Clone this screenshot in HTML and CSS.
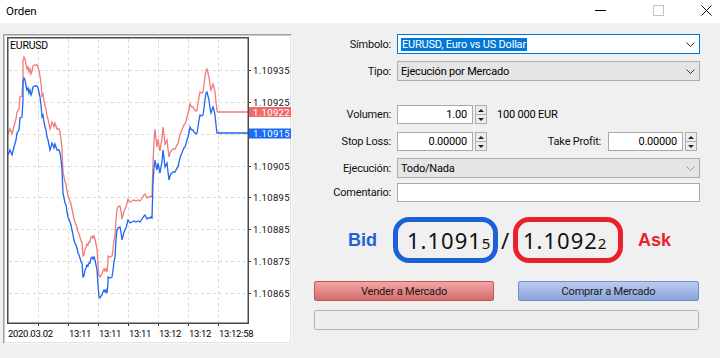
FILE: index.html
```html
<!DOCTYPE html>
<html lang="es">
<head>
<meta charset="utf-8">
<title>Orden</title>
<link rel="stylesheet" href="styles.css">
</head>
<body>
<div class="titlebar">
  <span class="title">Orden</span>
  <div class="controls">
    <svg class="ic-min" width="11" height="11" viewBox="0 0 11 11"><line x1="0" y1="5.5" x2="11" y2="5.5" stroke="#000" stroke-width="1"/></svg>
    <svg class="ic-max" width="11" height="11" viewBox="0 0 11 11"><rect x="0.5" y="0.5" width="10" height="10" fill="none" stroke="#c4c4c4" stroke-width="1"/></svg>
    <svg class="ic-close" width="11" height="11" viewBox="0 0 11 11"><path d="M0.5 0.5 L10.5 10.5 M10.5 0.5 L0.5 10.5" stroke="#111" stroke-width="1" fill="none"/></svg>
  </div>
</div>
<div class="main">
  <div class="chart-panel">
    <svg class="chart" width="287" height="308" viewBox="4 35 287 308">
      <g class="grid">
        <line x1="9" y1="70.5" x2="247" y2="70.5"/>
        <line x1="9" y1="102.5" x2="247" y2="102.5"/>
        <line x1="9" y1="134.5" x2="247" y2="134.5"/>
        <line x1="9" y1="166.5" x2="247" y2="166.5"/>
        <line x1="9" y1="197.5" x2="247" y2="197.5"/>
        <line x1="9" y1="229.5" x2="247" y2="229.5"/>
        <line x1="9" y1="261.5" x2="247" y2="261.5"/>
        <line x1="9" y1="293.5" x2="247" y2="293.5"/>
        <line x1="38.5" y1="39" x2="38.5" y2="322"/>
        <line x1="68.5" y1="39" x2="68.5" y2="322"/>
        <line x1="98.5" y1="39" x2="98.5" y2="322"/>
        <line x1="128.5" y1="39" x2="128.5" y2="322"/>
        <line x1="158.5" y1="39" x2="158.5" y2="322"/>
        <line x1="188.5" y1="39" x2="188.5" y2="322"/>
        <line x1="218.5" y1="39" x2="218.5" y2="322"/>
      </g>
      <g class="ticks">
        <line x1="248" y1="70.5" x2="251" y2="70.5"/>
        <line x1="248" y1="102.5" x2="251" y2="102.5"/>
        <line x1="248" y1="166.5" x2="251" y2="166.5"/>
        <line x1="248" y1="197.5" x2="251" y2="197.5"/>
        <line x1="248" y1="229.5" x2="251" y2="229.5"/>
        <line x1="248" y1="261.5" x2="251" y2="261.5"/>
        <line x1="248" y1="293.5" x2="251" y2="293.5"/>
        <line x1="38.5" y1="323" x2="38.5" y2="326"/>
        <line x1="68.5" y1="323" x2="68.5" y2="326"/>
        <line x1="98.5" y1="323" x2="98.5" y2="326"/>
        <line x1="128.5" y1="323" x2="128.5" y2="326"/>
        <line x1="158.5" y1="323" x2="158.5" y2="326"/>
        <line x1="188.5" y1="323" x2="188.5" y2="326"/>
        <line x1="218.5" y1="323" x2="218.5" y2="326"/>
      </g>
      <polyline class="ask-line" transform="translate(0,-21)" points="8,155 10,150 12,155 14,147 16,140 17,133 19,130 20,118 22,117 23,100 23,82 24,78 25,80 26,86 27,90 28,88 29,93 30,90 31,95 32,92 33,87 35,86 37,86 38,88 39,92 40,97 41,105 42,117 43,115 44,122 45,127 46,130 47,137 48,140 50,150 51,147 52,143 53,145 54,148 55,144 56,147 57,150 59,150 60,153 61,160 62,170 63,193 64,198 65,203 66,205 67,212 68,217 70,222 71,225 72,230 73,235 74,240 75,243 77,248 78,253 79,255 80,258 81,262 82,263 83,277 84,276 85,270 86,268 87,265 88,266 89,263 90,263 91,258 92,257 93,259 94,257 95,260 96,265 97,270 98,285 99,297 100,298 101,296 102,295 103,292 104,290 105,292 106,290 107,293 108,283 108,277 110,278 112,277 113,270 114,262 115,257 116,240 117,230 118,228 120,227 121,232 122,240 123,236 124,232 125,230 126,228 127,224 128,220 130,223 132,222 134,221 136,222 138,221 140,222 142,219 144,216 145,215 146,217 147,219 148,218 150,218 151,217 152,218 153,183 154,162 155,150 156,160 157,168 158,160 159,166 160,172 161,165 162,160 163,148 164,156 165,165 166,163 167,161 168,170 169,178 170,174 171,172 172,171 173,170 175,170 176,168 177,166 178,165 179,160 180,156 181,153 182,151 183,148 184,146 185,145 186,142 187,138 188,135 189,130 190,125 191,127 192,128 193,128 194,130 195,131 196,132 197,131 198,125 199,118 200,113 202,114 203,113 204,106 205,98 206,91 207,90 208,94 209,98 210,106 211,111 212,108 213,105 214,108 215,113 216,123 217,132 218,133 248,133"/>
      <polyline class="bid-line" points="8,155 10,150 12,155 14,147 16,140 17,133 19,130 20,118 22,117 23,100 23,82 24,78 25,80 26,86 27,90 28,88 29,93 30,90 31,95 32,92 33,87 35,86 37,86 38,88 39,92 40,97 41,105 42,117 43,115 44,122 45,127 46,130 47,137 48,140 50,150 51,147 52,143 53,145 54,148 55,144 56,147 57,150 59,150 60,153 61,160 62,170 63,193 64,198 65,203 66,205 67,212 68,217 70,222 71,225 72,230 73,235 74,240 75,243 77,248 78,253 79,255 80,258 81,262 82,263 83,277 84,276 85,270 86,268 87,265 88,266 89,263 90,263 91,258 92,257 93,259 94,257 95,260 96,265 97,270 98,285 99,297 100,298 101,296 102,295 103,292 104,290 105,292 106,290 107,293 108,283 108,277 110,278 112,277 113,270 114,262 115,257 116,240 117,230 118,228 120,227 121,232 122,240 123,236 124,232 125,230 126,228 127,224 128,220 130,223 132,222 134,221 136,222 138,221 140,222 142,219 144,216 145,215 146,217 147,219 148,218 150,218 151,217 152,218 153,183 154,168 155,160 156,166 157,170 158,163 159,168 160,173 161,167 162,162 163,150 164,158 165,167 166,165 167,163 168,172 169,180 170,176 171,174 172,173 173,172 175,172 176,170 177,168 178,167 179,162 180,158 181,155 182,153 183,150 184,148 185,147 186,144 187,140 188,137 189,132 190,127 191,129 192,130 193,130 194,132 195,133 196,134 197,133 198,127 199,120 200,115 202,116 203,115 204,108 205,100 206,93 207,92 208,96 209,100 210,108 211,113 212,110 213,107 214,110 215,115 216,125 217,133 248,133"/>
      <rect class="frame" x="7.75" y="37.75" width="240.5" height="285.5"/>
      <text class="sym" x="10" y="49">EURUSD</text>
      <g class="price">
        <text x="253" y="73.5">1.10935</text>
        <text x="253" y="105.5">1.10925</text>
        <text x="253" y="169.5">1.10905</text>
        <text x="253" y="200.5">1.10895</text>
        <text x="253" y="232.5">1.10885</text>
        <text x="253" y="264.5">1.10875</text>
        <text x="253" y="296.5">1.10865</text>
      </g>
      <rect class="ask-tag" x="249" y="107" width="43" height="10"/>
      <text class="tag-text" x="253" y="115.5">1.10922</text>
      <rect class="bid-tag" x="249" y="128.5" width="43" height="10"/>
      <text class="tag-text" x="253" y="137">1.10915</text>
      <g class="time">
        <text x="8" y="337">2020.03.02</text>
        <text x="69" y="337">13:11</text>
        <text x="99" y="337">13:11</text>
        <text x="129" y="337">13:11</text>
        <text x="159" y="337">13:12</text>
        <text x="189" y="337">13:12</text>
        <text x="219" y="337">13:12:58</text>
      </g>
    </svg>
  </div>

  <div class="form">
    <div class="row">
      <span class="lbl">Símbolo:</span>
      <div class="combo focus">
        <span class="sel">EURUSD, Euro vs US Dollar</span>
        <svg class="chev" width="9" height="5" viewBox="0 0 9 5"><polyline points="0.5,0.5 4.5,4.5 8.5,0.5" fill="none" stroke="#333" stroke-width="1"/></svg>
      </div>
    </div>
    <div class="row r2">
      <span class="lbl">Tipo:</span>
      <div class="combo">
        <span>Ejecución por Mercado</span>
        <svg class="chev" width="9" height="5" viewBox="0 0 9 5"><polyline points="0.5,0.5 4.5,4.5 8.5,0.5" fill="none" stroke="#333" stroke-width="1"/></svg>
      </div>
    </div>
    <div class="row r3">
      <span class="lbl">Volumen:</span>
      <div class="input num">1.00</div>
      <div class="spin"><span class="up"></span><span class="dn"></span></div>
      <span class="note">100 000 EUR</span>
    </div>
    <div class="row r4">
      <span class="lbl">Stop Loss:</span>
      <div class="input num">0.00000</div>
      <div class="spin"><span class="up"></span><span class="dn"></span></div>
      <span class="lbl tp">Take Profit:</span>
      <div class="input num tpv">0.00000</div>
      <div class="spin"><span class="up"></span><span class="dn"></span></div>
    </div>
    <div class="row r5">
      <span class="lbl">Ejecución:</span>
      <div class="combo">
        <span>Todo/Nada</span>
        <svg class="chev" width="9" height="5" viewBox="0 0 9 5"><polyline points="0.5,0.5 4.5,4.5 8.5,0.5" fill="none" stroke="#9a9a9a" stroke-width="1"/></svg>
      </div>
    </div>
    <div class="row r6">
      <span class="lbl">Comentario:</span>
      <div class="input wide"></div>
    </div>

    <div class="quotes">
      <span class="bid">Bid</span>
      <div class="qbox qb"><span class="qnum">1.1091<span class="small">5</span></span></div>
      <span class="slash">/</span>
      <div class="qbox qa"><span class="qnum">1.1092<span class="small">2</span></span></div>
      <span class="ask">Ask</span>
    </div>

    <div class="buttons">
      <div class="btn sell">Vender a Mercado</div>
      <div class="btn buy">Comprar a Mercado</div>
    </div>
    <div class="status"></div>
  </div>
</div>
</body>
</html>
```
FILE: styles.css
```css
* { box-sizing: border-box; margin: 0; padding: 0; }
html, body { width: 720px; height: 358px; overflow: hidden; }
body {
  background: #f0f0f0;
  font-family: Roboto, "Liberation Sans", sans-serif;
  font-size: 11px;
  letter-spacing: -0.2px;
  color: #000;
}

/* title bar */
.titlebar {
  height: 23px;
  background: #fff;
  display: flex;
  align-items: center;
  padding: 0 8px 2px 6px;
}
.title { flex: 1; font-size: 11.5px; letter-spacing: 0; }
.controls { display: flex; align-items: center; }
.controls svg { display: block; }
.ic-min { margin-right: 47px; }
.ic-max { margin-right: 37px; }

/* main area */
.main { display: flex; padding-top: 11px; }

.chart-panel {
  margin-left: 3px;
  width: 289px;
  height: 310px;
  background: #fff;
  border: 1px solid;
  border-color: #a0a0a0 #f8f8f8 #f8f8f8 #a0a0a0;
  box-shadow: inset 1px 1px 0 #c8c8c8, inset -1px -1px 0 #e3e3e3;
}
.chart { display: block; }
.grid line { stroke: #d9d9d9; stroke-width: 1; stroke-dasharray: 3 3; }
.ticks line { stroke: #333; stroke-width: 1; }
.frame { fill: none; stroke: #4a4a4a; stroke-width: 1.5; }
.bid-line { fill: none; stroke: #1f66f2; stroke-width: 1.3; stroke-linejoin: miter; }
.ask-line { fill: none; stroke: #f27a7a; stroke-width: 1.3; stroke-linejoin: miter; }
.sym { font-family: Roboto, "Liberation Sans", sans-serif; font-size: 10.5px; fill: #000; letter-spacing: -0.2px; }
.price text { font-family: Roboto, "Liberation Sans", sans-serif; font-size: 9.5px; letter-spacing: 0.35px; fill: #111; }
.tag-text { font-family: Roboto, "Liberation Sans", sans-serif; font-size: 9.5px; letter-spacing: 0.35px; fill: #fff; }
.ask-tag { fill: #f16a6a; }
.bid-tag { fill: #1a6cf2; }
.time text { font-family: Roboto, "Liberation Sans", sans-serif; font-size: 9.5px; letter-spacing: -0.3px; fill: #000; }

/* form */
.form {
  margin-left: 8px;
  width: 400px;
  display: flex;
  flex-direction: column;
}
.row { display: flex; align-items: center; }
.lbl { width: 91px; margin-right: 6px; text-align: right; color: #111; }
.r2 { margin-top: 7px; }
.r3 { margin-top: 24px; }
.r4 { margin-top: 8px; }
.r5 { margin-top: 7px; }
.r6 { margin-top: 5px; }

.combo {
  width: 303px;
  height: 20px;
  border: 1px solid #adadad;
  background: #e5e5e5;
  display: flex;
  align-items: center;
  padding-left: 3px;
}
.combo.focus { background: #fff; border-color: #0078d7; }
.chev { display: block; margin-left: auto; margin-right: 4px; }
.sel { background: #0078d7; color: #fff; padding: 0 1px; line-height: 13px; }

.input {
  height: 19px;
  border: 1px solid #a9a9a9;
  background: #fff;
  display: flex;
  align-items: center;
  justify-content: flex-end;
  padding-right: 5px;
}
.num { width: 76px; }
.tpv { width: 75px; }
.wide { width: 303px; height: 19px; }

.spin {
  width: 12px;
  height: 19px;
  margin-left: 2px;
  border: 1px solid #adadad;
  background: #ececec;
  display: flex;
  flex-direction: column;
}
.spin span { flex: 1; display: flex; align-items: center; justify-content: center; }
.spin span + span { border-top: 1px solid #adadad; }
.up::before {
  content: "";
  border-left: 3px solid transparent;
  border-right: 3px solid transparent;
  border-bottom: 3px solid #222;
}
.dn::before {
  content: "";
  border-left: 3px solid transparent;
  border-right: 3px solid transparent;
  border-top: 3px solid #222;
}
.note { margin-left: 10px; }
.lbl.tp { width: 114px; margin-right: 7px; }

/* quotes */
.quotes {
  display: flex;
  align-items: center;
  margin-top: 15px;
  padding-left: 48px;
}
.bid, .ask {
  font-family: "Liberation Sans", Arial, sans-serif;
  font-weight: bold;
  font-size: 18px;
  letter-spacing: 0;
}
.bid { color: #1f62d6; margin-right: 16px; }
.ask { color: #e8232b; margin-left: 15px; }
.qbox {
  height: 46px;
  border: 5px solid;
  border-radius: 16px;
  display: flex;
  align-items: center;
  font-family: "Noto Sans", "DejaVu Sans", sans-serif;
  font-size: 22px;
  letter-spacing: 1px;
  color: #111;
}
.qb { width: 105px; padding-left: 9px; border-color: #1e60d8; }
.qa { width: 110px; padding-left: 5px; border-color: #e8212a; }
.small { font-size: 15px; letter-spacing: 0; }
.slash {
  font-family: "Noto Sans", "DejaVu Sans", sans-serif;
  font-size: 22px;
  color: #111;
  margin: 0 4px 0 3px;
}

/* buttons */
.buttons { display: flex; margin-top: 18px; padding-left: 14px; }
.btn {
  height: 20px;
  display: flex;
  align-items: center;
  justify-content: center;
  border: 1px solid;
  border-radius: 2px;
  color: #1a1a1a;
}
.sell {
  width: 180px;
  background: linear-gradient(#f5a5a5, #d46c6c);
  border-color: #c05a5a;
}
.buy {
  width: 181px;
  margin-left: 24px;
  background: linear-gradient(#bacbf0, #8ba4db);
  border-color: #7290c8;
}
.status {
  margin: 9px 0 0 14px;
  width: 385px;
  height: 20px;
  border: 1px solid #b3b3b3;
  border-radius: 2px;
  background: #efefef;
}
```
